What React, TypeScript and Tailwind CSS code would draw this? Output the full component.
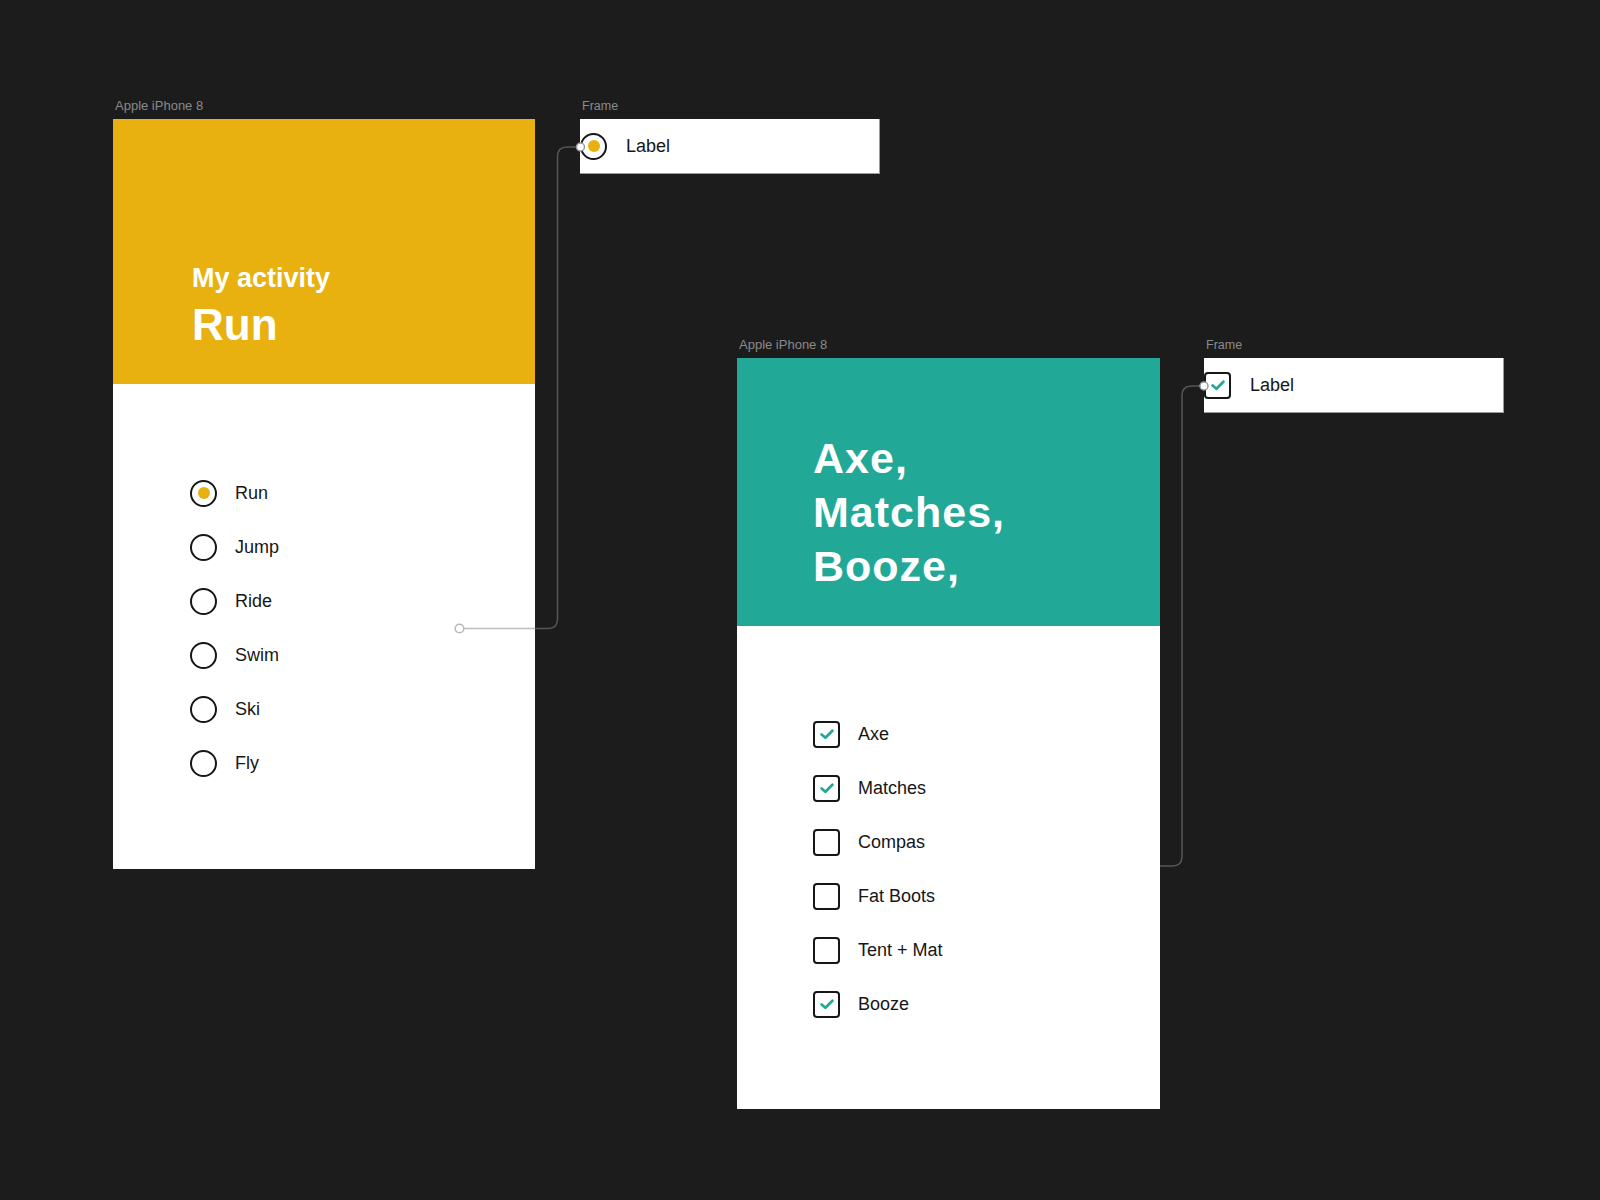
const YELLOW = 'bg-[#E9B10F]';

const activities = ['Run', 'Jump', 'Ride', 'Swim', 'Ski', 'Fly'];
const gear = [
  { name: 'Axe', checked: true },
  { name: 'Matches', checked: true },
  { name: 'Compas', checked: false },
  { name: 'Fat Boots', checked: false },
  { name: 'Tent + Mat', checked: false },
  { name: 'Booze', checked: true },
];

function Radio({ on }: { on?: boolean }) {
  return (
    <span className="flex h-[27px] w-[27px] shrink-0 items-center justify-center rounded-full border-[2.5px] border-[#161616] bg-white">
      {on && <span className={`h-[12px] w-[12px] rounded-full ${YELLOW}`} />}
    </span>
  );
}

function Checkbox({ on }: { on?: boolean }) {
  return (
    <span className="flex h-[27px] w-[27px] shrink-0 items-center justify-center rounded-[4px] border-[2.5px] border-[#161616] bg-white">
      {on && (
        <svg width="14" height="11" viewBox="0 0 14 11" fill="none">
          <path d="M1.6 5.4 L5.4 8.8 L12.4 1.8" stroke="#22A897" strokeWidth="2.7" strokeLinecap="round" strokeLinejoin="round" />
        </svg>
      )}
    </span>
  );
}

function CanvasLabel({ children, size = 'text-[13px]' }: { children: string; size?: string }) {
  return (
    <div className={`absolute bottom-full left-[2px] mb-[6px] whitespace-nowrap leading-[14px] text-[#8a8a8a] ${size}`}>
      {children}
    </div>
  );
}

export default function App() {
  return (
    <div className="relative h-[1200px] w-[1600px] overflow-hidden bg-[#1c1c1c] font-['Liberation_Sans',Arial,sans-serif]">
      {/* artboard: radio */}
      <div className="absolute left-[113px] top-[119px] w-[422px]">
        <CanvasLabel>Apple iPhone 8</CanvasLabel>
        <div className="flex h-[750px] flex-col bg-white">
          <div className={`flex h-[265px] flex-col justify-end pb-[37px] pl-[79px] text-white ${YELLOW}`}>
            <div className="mb-[10px] text-[27px] font-bold leading-[28px]">My activity</div>
            <div className="text-[44px] font-bold leading-[45px]">Run</div>
          </div>
          <div className="flex flex-col pl-[77px] pt-[82px]">
            {activities.map((a, i) => (
              <div key={a} className="flex h-[54px] items-center">
                <Radio on={i === 0} />
                <span className="ml-[18px] text-[18px] text-[#161616]">{a}</span>
              </div>
            ))}
          </div>
        </div>
      </div>

      {/* frame: radio component */}
      <div className="absolute left-[580px] top-[119px] w-[300px]">
        <CanvasLabel size="text-[12.5px]">Frame</CanvasLabel>
        <div className="flex h-[55px] items-center border-b border-r border-[#9a9a9a] bg-white">
          <Radio on />
          <span className="ml-[19px] text-[18px] text-[#161616]">Label</span>
        </div>
      </div>

      {/* artboard: checkbox */}
      <div className="absolute left-[737px] top-[358px] w-[423px]">
        <CanvasLabel>Apple iPhone 8</CanvasLabel>
        <div className="flex h-[751px] flex-col bg-white">
          <div className="h-[268px] bg-[#22A897] pl-[76px] pt-[73px] text-[43px] font-bold leading-[54px] tracking-[1px] text-white">
            <div>Axe,</div>
            <div>Matches,</div>
            <div>Booze,</div>
          </div>
          <div className="flex flex-col pl-[76px] pt-[81px]">
            {gear.map((g) => (
              <div key={g.name} className="flex h-[54px] items-center">
                <Checkbox on={g.checked} />
                <span className="ml-[18px] text-[18px] text-[#161616]">{g.name}</span>
              </div>
            ))}
          </div>
        </div>
      </div>

      {/* frame: checkbox component */}
      <div className="absolute left-[1204px] top-[358px] w-[300px]">
        <CanvasLabel size="text-[12.5px]">Frame</CanvasLabel>
        <div className="flex h-[55px] items-center border-b border-r border-[#9a9a9a] bg-white">
          <Checkbox on />
          <span className="ml-[19px] text-[18px] text-[#161616]">Label</span>
        </div>
      </div>

      {/* prototype connectors */}
      <svg className="pointer-events-none absolute left-0 top-0" width="1600" height="1200" fill="none">
        <path
          d="M464 628.5 H548 Q557.5 628.5 557.5 619 V156.5 Q557.5 147 567 147 H577"
          stroke="rgba(135,135,135,0.55)"
          strokeWidth="1.5"
        />
        <circle cx="459.5" cy="628.5" r="4.3" fill="white" stroke="#b8b8b8" strokeWidth="1.5" />
        <circle cx="580.5" cy="147" r="4" fill="white" stroke="#9a9a9a" strokeWidth="1.5" />
        <path
          d="M1160 866 H1172.5 Q1182 866 1182 856.5 V395.5 Q1182 386 1191.5 386 H1200"
          stroke="rgba(135,135,135,0.55)"
          strokeWidth="1.5"
        />
        <circle cx="1204" cy="386" r="4" fill="white" stroke="#9a9a9a" strokeWidth="1.5" />
      </svg>
    </div>
  );
}
